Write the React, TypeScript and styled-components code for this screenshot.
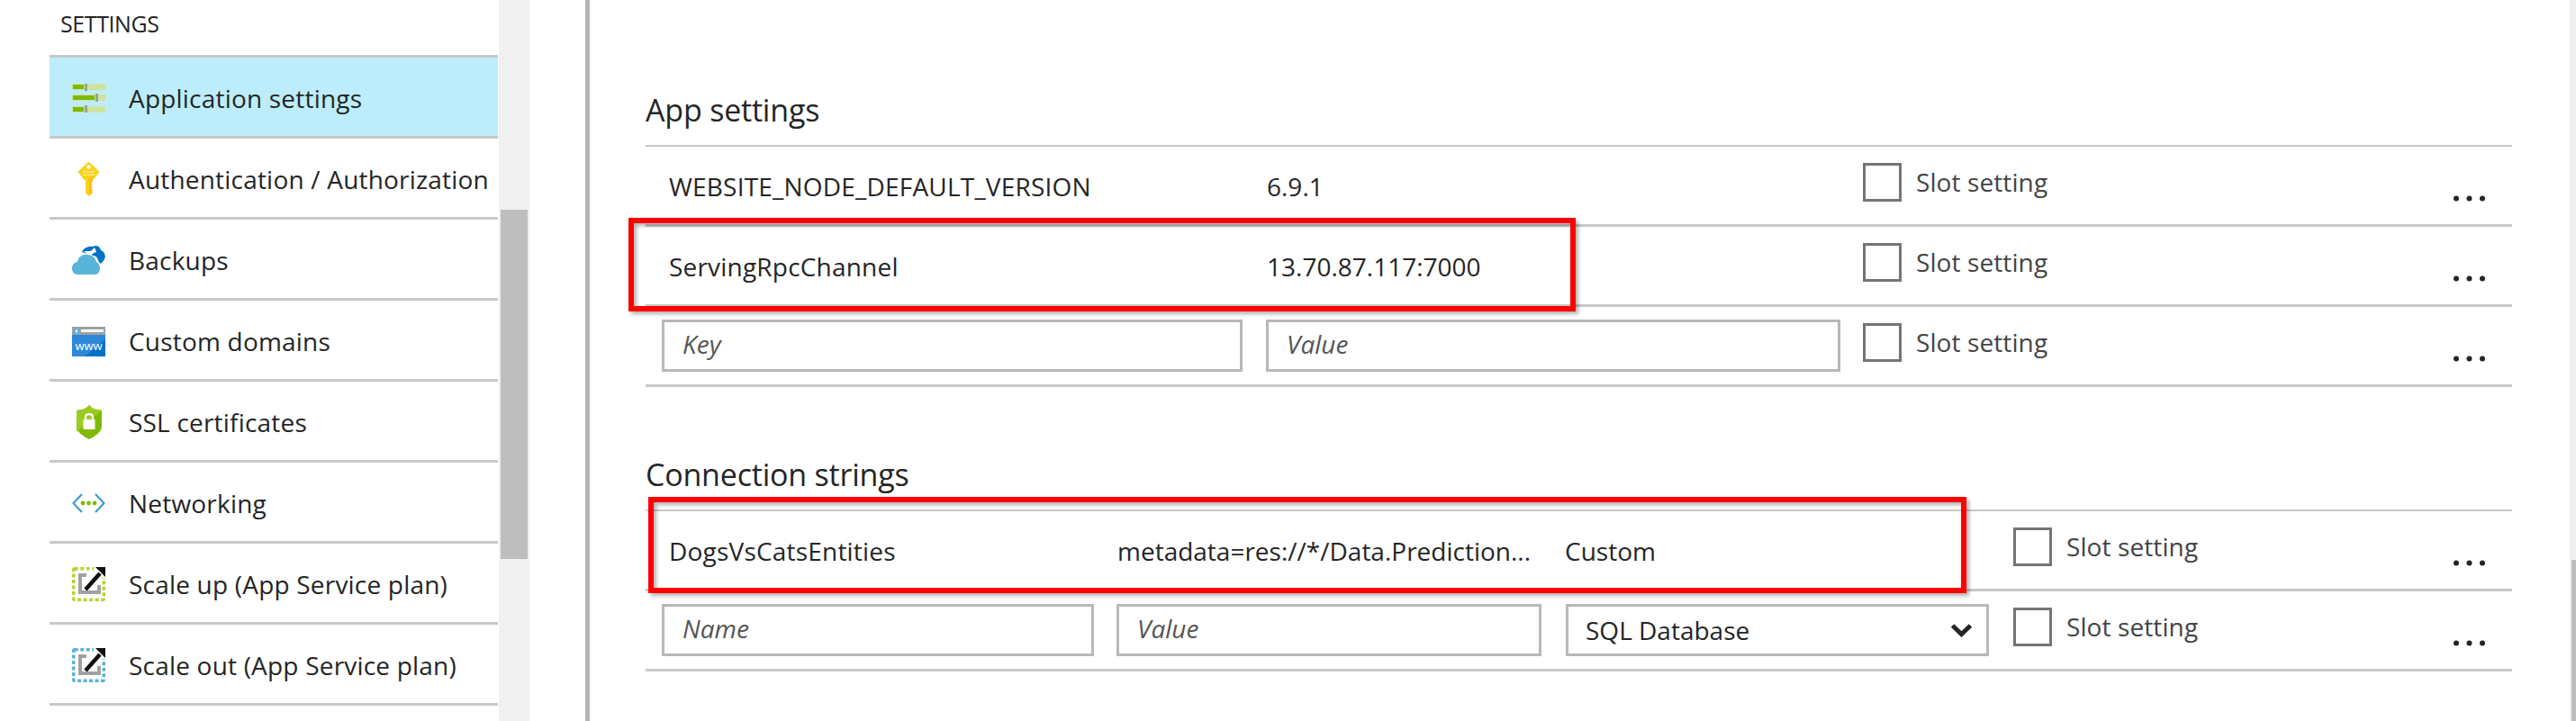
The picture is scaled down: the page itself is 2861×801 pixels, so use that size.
import styled, { createGlobalStyle } from "styled-components";

const GlobalStyle = createGlobalStyle`
    html, body {
        margin: 0;
        padding: 0;
        background: #fff;
    }
    body {
        font-family: "Open Sans", "Liberation Sans", sans-serif;
        color: #252525;
        overflow: hidden;
    }
`;

const SlidersIcon = () => (
    <svg width="37" height="32" viewBox="0 0 37 32">
        <rect x="0" y="0" width="37" height="7" fill="#cfe3a0" />
        <rect x="1" y="1" width="12" height="5" fill="#7fba00" />
        <rect x="14" y="-1" width="3" height="9" fill="#9aa392" />
        <rect x="0" y="12" width="37" height="7" fill="#cfe3a0" />
        <rect x="1" y="13" width="24" height="5" fill="#7fba00" />
        <rect x="26" y="11" width="3" height="9" fill="#9aa392" />
        <rect x="0" y="25" width="37" height="7" fill="#cfe3a0" />
        <rect x="1" y="26" width="12" height="5" fill="#7fba00" />
        <rect x="14" y="24" width="3" height="9" fill="#9aa392" />
    </svg>
);

const KeyIcon = () => (
    <svg width="23" height="38" viewBox="0 0 23 38">
        <path
            d="M11.5 1.5 L21.5 11 L15 19 H8 L1.5 11 Z"
            fill="#fcd116"
            stroke="#fcd116"
            strokeWidth="3"
            strokeLinejoin="round"
        />
        <path d="M8 18 H15.5 V22 L14 23.5 15.5 25 14 26.5 15.5 28 14 29.5 15.5 31 V34 L11.5 38 L8 34 Z" fill="#fcd116" />
        <path d="M12 18 H15.5 V22 L14 23.5 15.5 25 14 26.5 15.5 28 14 29.5 15.5 31 V34 L12 37.5 Z" fill="#f5bd12" />
        <circle cx="11.5" cy="5.5" r="2.2" fill="#fff" />
        <rect x="5" y="10" width="13" height="1.5" fill="#fde98c" />
        <rect x="5" y="13.5" width="13" height="1.5" fill="#fde98c" />
    </svg>
);

const CloudIcon = () => (
    <svg width="37" height="33" viewBox="0 0 37 33">
        <path
            d="M11 7 C13 2 19 0 23 1 C26 -1 31 0 32 5 C36 6 38 12 36 15 C35 17 33 19 31 20 L27 12 Z"
            fill="#0072c6"
        />
        <path
            d="M13 6 L21 6 L25 2 L27 7 L24 8 C22 10 20 12 19 11 C17 9 15 8 13 6 Z"
            fill="#fff"
        />
        <path
            d="M7 32 C2 32 0 29 0 25 C0 21 3 18 6 18 C7 12 12 9 17 10 C22 10 26 13 27 18 C29 19 31 21 31 25 C31 29 29 32 25 32 Z"
            fill="#59b4d9"
        />
    </svg>
);

const WwwIcon = () => (
    <svg width="37" height="33" viewBox="0 0 37 33">
        <rect width="37" height="33" fill="#0072c6" />
        <path d="M0 9 H37 V14 L14 33 H0 Z" fill="#2b88d8" />
        <rect width="37" height="9" fill="#a0a1a2" />
        <circle cx="5" cy="5" r="3.5" fill="#59b4d9" />
        <path d="M3 5 L6 3 V7 Z" fill="#fff" />
        <rect x="10" y="3" width="25" height="3" fill="#fff" />
        <text
            x="18.5"
            y="26"
            fontSize="13"
            fill="#fff"
            textAnchor="middle"
            fontFamily="'Open Sans', sans-serif"
        >
            www
        </text>
    </svg>
);

const ShieldIcon = () => (
    <svg width="28" height="38" viewBox="0 0 28 38">
        <path
            d="M14 0 L17 3 C20 5 24 5 28 6 V24 C28 30 20 35 14 38 C8 35 0 30 0 24 V6 C4 5 8 5 11 3 Z"
            fill="#7fba00"
        />
        <path
            d="M14 0 L17 3 C20 5 24 5 28 6 L0 30 C0 28 0 26 0 24 V6 C4 5 8 5 11 3 Z"
            fill="#9ccb1f"
        />
        <rect x="7.5" y="16" width="13" height="11" fill="#fff" />
        <path
            d="M10 17 V13.5 C10 9 18 9 18 13.5 V17"
            fill="none"
            stroke="#fff"
            strokeWidth="2.2"
        />
    </svg>
);

const NetworkIcon = () => (
    <svg width="37" height="22" viewBox="0 0 37 22">
        <path
            d="M11 1 L1.5 11 L11 21 M26 1 L35.5 11 L26 21"
            fill="none"
            stroke="#3999c6"
            strokeWidth="2"
        />
        <circle cx="12" cy="11" r="2.4" fill="#7fba00" />
        <circle cx="18.5" cy="11" r="2.4" fill="#7fba00" />
        <circle cx="25" cy="11" r="2.4" fill="#7fba00" />
    </svg>
);

const ScaleIcon = ({ $color }: { $color: string }) => (
    <svg width="37" height="38" viewBox="0 0 37 38">
        <rect
            x="1.75"
            y="1.75"
            width="33.5"
            height="34.5"
            rx="1"
            fill="none"
            stroke={$color}
            strokeWidth="3.5"
            strokeDasharray="4 2.5"
        />
        <rect x="24" y="0" width="13" height="12" fill="#fff" />
        <path
            d="M16 9 H9 V28 H30 V20"
            fill="none"
            stroke="#a0a1a2"
            strokeWidth="4"
        />
        <path d="M15 25 L31 7" stroke="#111" strokeWidth="4.5" />
        <path d="M26 0 H37 V11 Z" fill="#111" />
    </svg>
);

const Dots = () => (
    <svg width="35" height="9" viewBox="0 0 35 9">
        <circle cx="3" cy="4.5" r="3" fill="#252525" />
        <circle cx="17.5" cy="4.5" r="3" fill="#252525" />
        <circle cx="32" cy="4.5" r="3" fill="#252525" />
    </svg>
);

const MENU = [
    { label: "Application settings", icon: <SlidersIcon />, selected: true },
    { label: "Authentication / Authorization", icon: <KeyIcon /> },
    { label: "Backups", icon: <CloudIcon /> },
    { label: "Custom domains", icon: <WwwIcon /> },
    { label: "SSL certificates", icon: <ShieldIcon /> },
    { label: "Networking", icon: <NetworkIcon /> },
    { label: "Scale up (App Service plan)", icon: <ScaleIcon $color="#b8d432" /> },
    { label: "Scale out (App Service plan)", icon: <ScaleIcon $color="#59b4d9" /> },
];

const SlotSetting = ({ $left = 0 }: { $left?: number }) => (
    <SlotCell $left={$left}>
        <Checkbox />
        <SlotLabel>Slot setting</SlotLabel>
    </SlotCell>
);

const App = () => {
    return (
        <>
            <GlobalStyle />
            <Page>
                <Sidebar>
                    <SidebarTitle>SETTINGS</SidebarTitle>
                    <MenuList>
                        {MENU.map((item) => (
                            <MenuItem key={item.label} $selected={!!item.selected}>
                                <MenuIcon>{item.icon}</MenuIcon>
                                <MenuLabel>{item.label}</MenuLabel>
                            </MenuItem>
                        ))}
                    </MenuList>
                </Sidebar>
                <SidebarScroll>
                    <SidebarThumb />
                </SidebarScroll>
                <Divider />
                <Main>
                    <Section $top={104}>
                        <SectionTitle>App settings</SectionTitle>
                        <Rows>
                            <Row>
                                <NameCell $width={690}>WEBSITE_NODE_DEFAULT_VERSION</NameCell>
                                <ValueCell $width={662}>6.9.1</ValueCell>
                                <SlotSetting />
                                <MoreCell><Dots /></MoreCell>
                            </Row>
                            <Row>
                                <NameCell $width={690}>ServingRpcChannel</NameCell>
                                <ValueCell $width={662}>13.70.87.117:7000</ValueCell>
                                <SlotSetting />
                                <MoreCell><Dots /></MoreCell>
                            </Row>
                            <Row>
                                <InputBox $width={645} $left={18}>Key</InputBox>
                                <InputBox $width={638} $left={26}>Value</InputBox>
                                <SlotSetting $left={25} />
                                <MoreCell><Dots /></MoreCell>
                            </Row>
                        </Rows>
                    </Section>
                    <Section $top={79}>
                        <SectionTitle>Connection strings</SectionTitle>
                        <Rows>
                            <Row>
                                <NameCell $width={524}>DogsVsCatsEntities</NameCell>
                                <ValueCell $width={497}>metadata=res://*/Data.Prediction...</ValueCell>
                                <ValueCell $width={498}>Custom</ValueCell>
                                <SlotSetting />
                                <MoreCell><Dots /></MoreCell>
                            </Row>
                            <Row>
                                <InputBox $width={480} $left={18}>Name</InputBox>
                                <InputBox $width={472} $left={25}>Value</InputBox>
                                <SelectBox>
                                    SQL Database
                                    <svg width="25" height="16" viewBox="0 0 25 16">
                                        <path
                                            d="M2.5 3 L12.5 12.5 L22.5 3"
                                            fill="none"
                                            stroke="#252525"
                                            strokeWidth="5"
                                        />
                                    </svg>
                                </SelectBox>
                                <SlotSetting $left={27} />
                                <MoreCell><Dots /></MoreCell>
                            </Row>
                        </Rows>
                    </Section>
                </Main>
                <PageScroll>
                    <PageThumb />
                </PageScroll>
                <Highlight $top={242} $left={698} $width={1052} $height={104} />
                <Highlight $top={552} $left={720} $width={1464} $height={107} />
            </Page>
        </>
    );
};

export default App;

const Page = styled.div`
    position: relative;
    display: flex;
    width: 2861px;
    height: 801px;
    overflow: hidden;
`;

const Sidebar = styled.aside`
    width: 498px;
    margin-left: 55px;
    flex-shrink: 0;
`;

const SidebarTitle = styled.div`
    height: 61px;
    padding: 12px 0 0 12px;
    box-sizing: border-box;
    font-size: 25px;
    line-height: 28px;
    letter-spacing: -0.4px;
`;

const MenuList = styled.div`
    border-top: 3px solid #c8c8c8;
`;

const MenuItem = styled.div<{ $selected: boolean }>`
    display: flex;
    align-items: center;
    height: 87px;
    border-bottom: 3px solid #c8c8c8;
    background: ${({ $selected }) => ($selected ? "#bdedfb" : "#fff")};
`;

const MenuIcon = styled.div`
    width: 37px;
    margin-left: 25px;
    padding-top: 3px;
    display: flex;
    justify-content: center;
    flex-shrink: 0;
`;

const MenuLabel = styled.div`
    margin-left: 26px;
    padding-top: 3px;
    font-size: 28px;
    line-height: 36px;
    letter-spacing: 0.2px;
    white-space: nowrap;
`;

const SidebarScroll = styled.div`
    width: 34px;
    margin-left: 1px;
    padding-top: 233px;
    background: #f0f0f0;
    flex-shrink: 0;
`;

const SidebarThumb = styled.div`
    width: 30px;
    height: 388px;
    margin-left: 2px;
    background: #bebebe;
`;

const Divider = styled.div`
    width: 5px;
    margin-left: 62px;
    background: #b5b5b5;
    flex-shrink: 0;
`;

const Main = styled.main`
    width: 2073px;
    margin-left: 62px;
    flex-shrink: 0;
`;

const Section = styled.section<{ $top: number }>`
    margin-top: ${({ $top }) => $top}px;
`;

const SectionTitle = styled.div`
    height: 57px;
    font-size: 34px;
    line-height: 36px;
    letter-spacing: -0.2px;
`;

const Rows = styled.div`
    border-top: 2px solid #c8c8c8;
`;

const Row = styled.div`
    position: relative;
    display: flex;
    align-items: center;
    height: 86px;
    border-bottom: 3px solid #c8c8c8;
`;

const NameCell = styled.div<{ $width: number }>`
    width: ${({ $width }) => $width}px;
    padding: 2px 0 0 26px;
    box-sizing: border-box;
    font-size: 28px;
    letter-spacing: 0.2px;
    white-space: nowrap;
    flex-shrink: 0;
`;

const ValueCell = styled.div<{ $width: number }>`
    width: ${({ $width }) => $width}px;
    padding-top: 2px;
    font-size: 28px;
    white-space: nowrap;
    flex-shrink: 0;
`;

const InputBox = styled.div<{ $width: number; $left: number }>`
    width: ${({ $width }) => $width}px;
    height: 58px;
    margin-left: ${({ $left }) => $left}px;
    padding-left: 20px;
    box-sizing: border-box;
    border: 3px solid #b8b8b8;
    font-size: 28px;
    font-style: italic;
    line-height: 48px;
    color: #555;
    flex-shrink: 0;
`;

const SelectBox = styled.div`
    display: flex;
    align-items: center;
    justify-content: space-between;
    width: 470px;
    height: 58px;
    margin-left: 27px;
    padding: 0 15px 0 19px;
    box-sizing: border-box;
    border: 3px solid #b8b8b8;
    font-size: 28px;
    flex-shrink: 0;
`;

const SlotCell = styled.div<{ $left: number }>`
    display: flex;
    gap: 16px;
    align-self: flex-start;
    margin-top: 18px;
    margin-left: ${({ $left }) => $left}px;
    flex-shrink: 0;
`;

const Checkbox = styled.div`
    width: 43px;
    height: 43px;
    box-sizing: border-box;
    border: 3px solid #757575;
`;

const SlotLabel = styled.div`
    font-size: 28px;
    line-height: 42px;
    letter-spacing: 0.1px;
    color: #444;
    white-space: nowrap;
`;

const MoreCell = styled.div`
    position: absolute;
    top: 53px;
    right: 30px;
    line-height: 0;
`;

const Highlight = styled.div<{
    $top: number;
    $left: number;
    $width: number;
    $height: number;
}>`
    position: absolute;
    top: ${({ $top }) => $top}px;
    left: ${({ $left }) => $left}px;
    width: ${({ $width }) => $width}px;
    height: ${({ $height }) => $height}px;
    box-sizing: border-box;
    border: 6px solid #ff0000;
    box-shadow:
        3px 3px 4px rgba(0, 0, 0, 0.3),
        inset 3px 3px 4px rgba(0, 0, 0, 0.3);
`;

const PageScroll = styled.div`
    width: 7px;
    margin-left: 64px;
    padding: 622px 0 0 2px;
    box-sizing: border-box;
    background: #f0f0f0;
    flex-shrink: 0;
`;

const PageThumb = styled.div`
    height: 179px;
    background: #bebebe;
`;
